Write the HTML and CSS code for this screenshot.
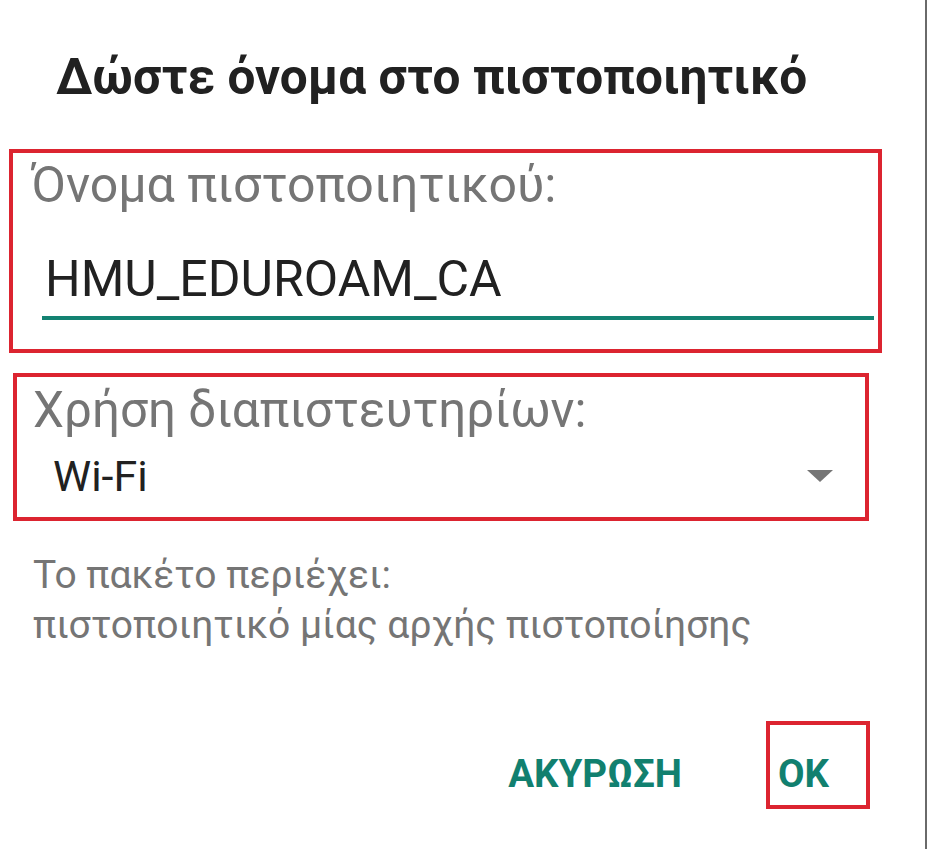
FILE: index.html
```html
<!DOCTYPE html>
<html lang="el">
<head>
<meta charset="utf-8">
<title>Δώστε όνομα στο πιστοποιητικό</title>
<link rel="stylesheet" href="styles.css">
</head>
<body>
<div class="page">
  <h1 class="title">Δώστε όνομα στο πιστοποιητικό</h1>
  <div class="field name-field">
    <div class="label">Όνομα πιστοποιητικού:</div>
    <div class="input">HMU_EDUROAM_CA</div>
  </div>
  <div class="field use-field">
    <div class="label label-use">Χρήση διαπιστευτηρίων:</div>
    <div class="select">
      <span class="select-value">Wi-Fi</span>
      <svg class="arrow" width="26" height="12" viewBox="0 0 26 12"><polygon points="0,0 26,0 13,12" fill="#757575"/></svg>
    </div>
  </div>
  <p class="info">Το πακέτο περιέχει:<br>πιστοποιητικό μίας αρχής πιστοποίησης</p>
  <div class="actions">
    <button class="btn cancel">ΑΚΥΡΩΣΗ</button>
    <button class="btn ok">OK</button>
  </div>
</div>
</body>
</html>
```

FILE: styles.css
```css
html, body {
  margin: 0;
  padding: 0;
  background: #ffffff;
}

.page {
  box-sizing: border-box;
  width: 927px;
  height: 849px;
  border-right: 2px solid #6a6a6a;
  font-family: Roboto, "Noto Sans", sans-serif;
  overflow: hidden;
}

.title {
  margin: 0;
  padding: 52px 0 0 56px;
  font-size: 49.5px;
  line-height: 50px;
  font-weight: 700;
  color: #212121;
}

.field {
  box-sizing: border-box;
  border: 4px solid #dc2430;
}

.label {
  font-size: 50px;
  line-height: 52px;
  color: #757575;
}

.label-use {
  font-size: 49.4px;
}

.name-field {
  margin: 47px 0 0 9px;
  width: 873px;
  height: 204px;
  padding: 6px 0 0 18px;
}

.input {
  margin: 42px 4px 0 11px;
  padding: 0 0 11px 3px;
  font-size: 50px;
  line-height: 52px;
  color: #212121;
  border-bottom: 4px solid #138272;
}

.use-field {
  margin: 20px 0 0 13px;
  width: 856px;
  height: 148px;
  padding: 7px 0 0 16px;
}

.select {
  display: flex;
  align-items: center;
  justify-content: space-between;
  margin: 16px 32px 0 20px;
}

.select-value {
  font-size: 43px;
  line-height: 48px;
  color: #212121;
}

.arrow {
  display: block;
}

.info {
  margin: 29px 0 0 33px;
  font-size: 39px;
  line-height: 50px;
  color: #757575;
}

.actions {
  display: flex;
  justify-content: flex-end;
  align-items: flex-start;
  gap: 84px;
  margin: 71px 55px 0 0;
}

.btn {
  background: none;
  border: 0;
  padding: 0;
  font-family: Roboto, "Noto Sans", sans-serif;
  font-weight: 700;
  font-size: 38.5px;
  line-height: 44px;
  color: #11806f;
}

.cancel {
  margin-top: 31px;
}

.ok {
  box-sizing: border-box;
  display: flex;
  align-items: flex-start;
  justify-content: flex-start;
  width: 104px;
  height: 88px;
  border: 4px solid #dc2430;
  padding: 27px 0 0 8px;
}
```
